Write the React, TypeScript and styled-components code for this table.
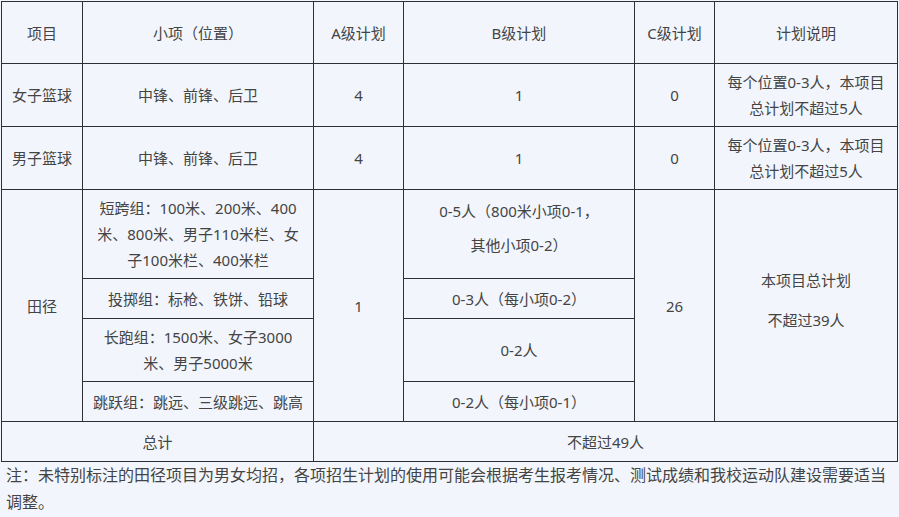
import React from "react";
import styled, { createGlobalStyle } from "styled-components";

const GlobalStyle = createGlobalStyle`
  html, body {
    margin: 0;
    padding: 0;
    background: #f2f6fc;
  }
  body {
    font-family: "Noto Sans", "Noto Sans CJK SC", sans-serif;
    color: #444;
  }
`;

const Page = styled.div`
  padding: 1px 0 0 1px;
  width: 898px;
  box-sizing: border-box;
`;

const Table = styled.table`
  width: 896px;
  table-layout: fixed;
  border-collapse: collapse;
  font-size: 15px;
  line-height: 26px;
`;

const Row = styled.tr<{ $h: number }>`
  height: ${(p) => p.$h}px;
`;

const Cell = styled.td<{ $top?: boolean; $padBottom?: number }>`
  border: 1px solid #2e3033;
  text-align: center;
  vertical-align: ${(p) => (p.$top ? "top" : "middle")};
  padding: 0 4px ${(p) => p.$padBottom ?? 0}px;
  white-space: nowrap;
`;

const Tall = styled.div<{ $lh: number; $pt?: number }>`
  line-height: ${(p) => p.$lh}px;
  padding-top: ${(p) => p.$pt ?? 0}px;
`;

const Note = styled.p`
  margin: 0;
  padding: 0 0 0 5px;
  font-size: 16px;
  line-height: 27px;
  color: #444;
  white-space: nowrap;
`;

const widths = [81, 231, 90, 231, 80, 183];

const basketball = ["女子篮球", "男子篮球"];

export default function App() {
  return (
    <Page>
      <GlobalStyle />
      <Table>
        <colgroup>
          {widths.map((w, i) => (
            <col key={i} style={{ width: w }} />
          ))}
        </colgroup>
        <tbody>
          <Row $h={62}>
            <Cell>项目</Cell>
            <Cell>小项（位置）</Cell>
            <Cell>A级计划</Cell>
            <Cell>B级计划</Cell>
            <Cell>C级计划</Cell>
            <Cell>计划说明</Cell>
          </Row>
          {basketball.map((name) => (
            <Row $h={63} key={name}>
              <Cell>{name}</Cell>
              <Cell>中锋、前锋、后卫</Cell>
              <Cell>4</Cell>
              <Cell>1</Cell>
              <Cell>0</Cell>
              <Cell>
                每个位置0-3人，本项目
                <br />
                总计划不超过5人
              </Cell>
            </Row>
          ))}
          <Row $h={89}>
            <Cell rowSpan={4}>田径</Cell>
            <Cell>
              短跨组：100米、200米、400
              <br />
              米、800米、男子110米栏、女
              <br />
              子100米栏、400米栏
            </Cell>
            <Cell rowSpan={4}>1</Cell>
            <Cell $top>
              <Tall $lh={34} $pt={4}>
                0-5人（800米小项0-1，
                <br />
                其他小项0-2）
              </Tall>
            </Cell>
            <Cell rowSpan={4}>26</Cell>
            <Cell rowSpan={4} $padBottom={12}>
              <Tall $lh={40}>
                本项目总计划
                <br />
                不超过39人
              </Tall>
            </Cell>
          </Row>
          <Row $h={40}>
            <Cell>投掷组：标枪、铁饼、铅球</Cell>
            <Cell>0-3人（每小项0-2）</Cell>
          </Row>
          <Row $h={63}>
            <Cell>
              长跑组：1500米、女子3000
              <br />
              米、男子5000米
            </Cell>
            <Cell>0-2人</Cell>
          </Row>
          <Row $h={40}>
            <Cell>跳跃组：跳远、三级跳远、跳高</Cell>
            <Cell>0-2人（每小项0-1）</Cell>
          </Row>
          <Row $h={40}>
            <Cell colSpan={2}>总计</Cell>
            <Cell colSpan={4}>不超过49人</Cell>
          </Row>
        </tbody>
      </Table>
      <Note>
        注：未特别标注的田径项目为男女均招，各项招生计划的使用可能会根据考生报考情况、测试成绩和我校运动队建设需要适当
        <br />
        调整。
      </Note>
    </Page>
  );
}
